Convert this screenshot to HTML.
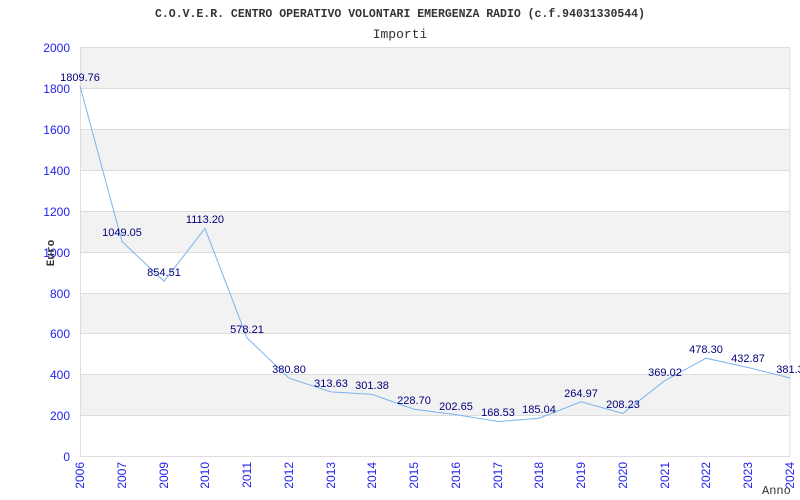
<!DOCTYPE html>
<html><head><style>body{margin:0;background:#fff}svg{display:block}</style></head><body>
<svg width="800" height="500" xmlns="http://www.w3.org/2000/svg">
<rect width="800" height="500" fill="#fff"/>
<text x="400" y="17" text-anchor="middle" font-family="Liberation Mono, monospace" font-weight="bold" font-size="11.5" fill="#333">C.O.V.E.R. CENTRO OPERATIVO VOLONTARI EMERGENZA RADIO (c.f.94031330544)</text>
<text x="400" y="38" text-anchor="middle" font-family="Liberation Mono, monospace" font-size="13" fill="#333">Importi</text>
<g fill="#f2f2f2">
<rect x="80" y="47" width="710" height="41"/>
<rect x="80" y="129" width="710" height="41"/>
<rect x="80" y="211" width="710" height="41"/>
<rect x="80" y="293" width="710" height="41"/>
<rect x="80" y="374" width="710" height="41"/>
</g>
<g stroke="#ddd" stroke-width="1">
<line x1="80" y1="88.5" x2="790" y2="88.5"/><line x1="80" y1="129.5" x2="790" y2="129.5"/>
<line x1="80" y1="170.5" x2="790" y2="170.5"/><line x1="80" y1="211.5" x2="790" y2="211.5"/>
<line x1="80" y1="252.5" x2="790" y2="252.5"/><line x1="80" y1="293.5" x2="790" y2="293.5"/>
<line x1="80" y1="333.5" x2="790" y2="333.5"/><line x1="80" y1="374.5" x2="790" y2="374.5"/>
<line x1="80" y1="415.5" x2="790" y2="415.5"/>
<rect x="80.5" y="47.5" width="709.5" height="409" fill="none"/>
</g>
<g font-family="Liberation Sans, sans-serif" font-size="12" fill="#22e" text-anchor="end">
<text x="70" y="52">2000</text><text x="70" y="93">1800</text><text x="70" y="134">1600</text>
<text x="70" y="175">1400</text><text x="70" y="216">1200</text><text x="70" y="257">1000</text>
<text x="70" y="298">800</text><text x="70" y="338">600</text><text x="70" y="379">400</text>
<text x="70" y="420">200</text><text x="70" y="461">0</text>
</g>
<polyline fill="none" stroke="#7ab4f0" stroke-width="1" points="80,86 122,241.5 164,281.3 205,228.4 247,337.8 289,378.1 331,391.9 372,394.4 414,409.2 456,414.6 498,421.5 539,418.2 581,401.8 623,413.4 665,380.5 706,358.2 748,367.5 790,378"/>
<g font-family="Liberation Sans, sans-serif" font-size="11" fill="#00007a" text-anchor="middle">
<text x="80" y="81">1809.76</text><text x="122" y="236">1049.05</text><text x="164" y="276">854.51</text>
<text x="205" y="223">1113.20</text><text x="247" y="333">578.21</text><text x="289" y="373">380.80</text>
<text x="331" y="387">313.63</text><text x="372" y="389">301.38</text><text x="414" y="404">228.70</text>
<text x="456" y="410">202.65</text><text x="498" y="416">168.53</text><text x="539" y="413">185.04</text>
<text x="581" y="397">264.97</text><text x="623" y="408">208.23</text><text x="665" y="376">369.02</text>
<text x="706" y="353">478.30</text><text x="748" y="362">432.87</text><text x="790" y="373">381.3</text>
</g>
<g font-family="Liberation Sans, sans-serif" font-size="12" fill="#22e" text-anchor="end">
<text transform="translate(84,462) rotate(-90)">2006</text>
<text transform="translate(126,462) rotate(-90)">2007</text>
<text transform="translate(168,462) rotate(-90)">2009</text>
<text transform="translate(209,462) rotate(-90)">2010</text>
<text transform="translate(251,462) rotate(-90)">2011</text>
<text transform="translate(293,462) rotate(-90)">2012</text>
<text transform="translate(335,462) rotate(-90)">2013</text>
<text transform="translate(376,462) rotate(-90)">2014</text>
<text transform="translate(418,462) rotate(-90)">2015</text>
<text transform="translate(460,462) rotate(-90)">2016</text>
<text transform="translate(502,462) rotate(-90)">2017</text>
<text transform="translate(543,462) rotate(-90)">2018</text>
<text transform="translate(585,462) rotate(-90)">2019</text>
<text transform="translate(627,462) rotate(-90)">2020</text>
<text transform="translate(669,462) rotate(-90)">2021</text>
<text transform="translate(710,462) rotate(-90)">2022</text>
<text transform="translate(752,462) rotate(-90)">2023</text>
<text transform="translate(794,462) rotate(-90)">2024</text>
</g>
<text transform="translate(54,253) rotate(-90)" text-anchor="middle" font-family="Liberation Mono, monospace" font-weight="bold" font-size="11" fill="#333">Euro</text>
<text x="762" y="494" font-family="Liberation Mono, monospace" font-size="12" fill="#333">Anno</text>
</svg>
</body></html>
